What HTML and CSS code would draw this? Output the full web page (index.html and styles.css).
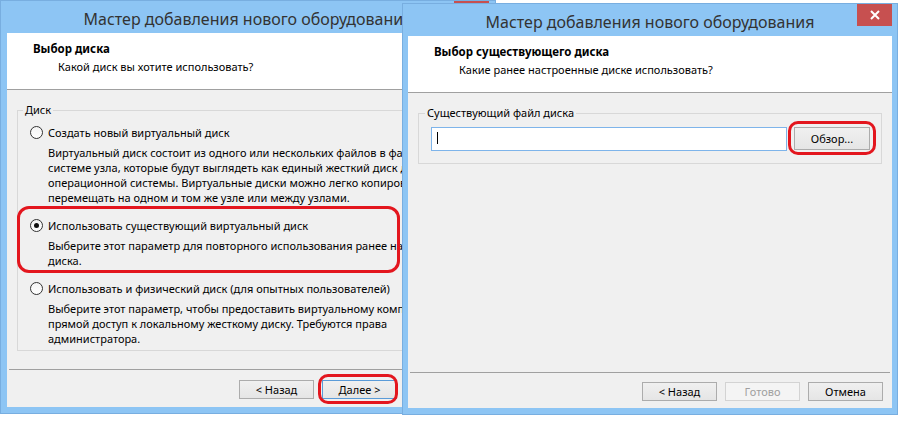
FILE: index.html
```html
<!DOCTYPE html>
<html lang="ru">
<head>
    <meta charset="UTF-8">
    <title>Мастер добавления нового оборудования</title>
    <link rel="stylesheet" href="styles.css">
</head>
<body>
<div class="desktop">
    <!-- окно на заднем плане -->
    <div class="window win-back">
        <div class="titlebar">
            <span class="title">Мастер добавления нового оборудования</span>
            <span class="close"><svg width="10" height="10" viewBox="0 0 10 10"><path d="M1 1L9 9M9 1L1 9" stroke="#fff" stroke-width="2"/></svg></span>
        </div>
        <div class="client">
            <div class="header">
                <div class="header-title">Выбор диска</div>
                <div class="header-sub">Какой диск вы хотите использовать?</div>
            </div>
            <div class="content">
                <fieldset class="group group-disk">
                    <legend>Диск</legend>
                    <div class="option">
                        <div class="radio"><span class="dot"></span>Создать новый виртуальный диск</div>
                        <p class="desc">Виртуальный диск состоит из одного или нескольких файлов в файловой<br>системе узла, которые будут выглядеть как единый жесткий диск для<br>операционной системы. Виртуальные диски можно легко копировать или<br>перемещать на одном и том же узле или между узлами.</p>
                    </div>
                    <div class="option marked">
                        <div class="radio"><span class="dot on"></span>Использовать существующий виртуальный диск</div>
                        <p class="desc">Выберите этот параметр для повторного использования ранее настроенного<br>диска.</p>
                    </div>
                    <div class="option">
                        <div class="radio"><span class="dot"></span>Использовать и физический диск (для опытных пользователей)</div>
                        <p class="desc">Выберите этот параметр, чтобы предоставить виртуальному компьютеру<br>прямой доступ к локальному жесткому диску. Требуются права<br>администратора.</p>
                    </div>
                </fieldset>
            </div>
            <div class="footer footer-back">
                <button class="btn">&lt; Назад</button>
                <button class="btn default marked-next">Далее &gt;</button>
                <button class="btn">Отмена</button>
            </div>
        </div>
    </div>

    <!-- активное окно -->
    <div class="window win-front">
        <div class="titlebar">
            <span class="title">Мастер добавления нового оборудования</span>
            <span class="close"><svg width="10" height="10" viewBox="0 0 10 10"><path d="M1 1L9 9M9 1L1 9" stroke="#fff" stroke-width="2"/></svg></span>
        </div>
        <div class="client">
            <div class="header">
                <div class="header-title">Выбор существующего диска</div>
                <div class="header-sub">Какие ранее настроенные диске использовать?</div>
            </div>
            <div class="content">
                <fieldset class="group group-file">
                    <legend>Существующий файл диска</legend>
                    <div class="file-row">
                        <div class="input"><span class="caret"></span></div>
                        <button class="btn browse">Обзор...</button>
                    </div>
                </fieldset>
            </div>
            <div class="footer footer-front">
                <button class="btn">&lt; Назад</button>
                <button class="btn" disabled>Готово</button>
                <button class="btn">Отмена</button>
            </div>
        </div>
    </div>
</div>
</body>
</html>
```

FILE: styles.css
```css
body {
    margin: 0;
    font-family: "Noto Sans", "Open Sans", sans-serif;
    font-size: 11px;
    color: #000;
    background: #fff;
}
.desktop {
    position: relative;
    width: 900px;
    height: 421px;
    overflow: hidden;
}

/* окна */
.window {
    position: absolute;
    box-sizing: border-box;
    display: flex;
    flex-direction: column;
    background: #8dc5f4;
    border: 1px solid #78aee0;
}
.win-back {
    left: 0;
    top: 0;
    width: 496px;
    height: 414px;
    padding: 0 6px 6px;
}
.win-front {
    left: 402px;
    top: 3px;
    width: 496px;
    height: 412px;
    padding: 0 5px 6px;
}
.titlebar {
    position: relative;
    flex: none;
    height: 32px;
    display: flex;
    align-items: center;
    justify-content: center;
}
.title {
    font-size: 16px;
    color: #333;
    line-height: 1;
    padding-top: 3px;
    white-space: nowrap;
}
.close {
    position: absolute;
    right: 0;
    top: 0;
    width: 35px;
    height: 22px;
    background: #c75050;
    display: flex;
    align-items: center;
    justify-content: center;
}

.client {
    flex: 1;
    display: flex;
    flex-direction: column;
    background: #f0f0f0;
    overflow: hidden;
}
.header {
    flex: none;
    box-sizing: border-box;
    height: 57px;
    background: #fff;
    border-bottom: 1px solid #a0a0a0;
    padding: 8px 0 0 26px;
}
.header-title {
    font-size: 11.5px;
    font-weight: bold;
    line-height: 16px;
}
.header-sub {
    margin: 2px 0 0 25px;
    line-height: 16px;
}
.content {
    flex: 1;
    padding: 0 10px;
}

/* группы */
.group {
    margin: 12px 0 0;
    border: 1px solid #d8d8d8;
    min-width: 0;
}
.group legend {
    padding: 0 2px;
    line-height: 16px;
}
.group-disk {
    padding: 6px 11px 4px 12px;
}
.group-disk legend {
    margin-left: -7px;
}
.group-file {
    padding: 6px 11px 12px 12px;
}
.group-file legend {
    margin-left: -6px;
}

.option {
    position: relative;
}
.option + .option {
    margin-top: 12px;
}
.option.marked::after {
    content: "";
    position: absolute;
    left: -13px;
    top: -11px;
    width: 383px;
    height: 67px;
    box-sizing: border-box;
    border: 3px solid #e3161e;
    border-radius: 12px;
}
.radio {
    display: flex;
    align-items: center;
    height: 16px;
    white-space: nowrap;
}
.dot {
    position: relative;
    width: 11px;
    height: 11px;
    border: 1px solid #333;
    border-radius: 50%;
    background: linear-gradient(#f4f4f4, #fff);
    margin-right: 5px;
}
.dot.on::after {
    content: "";
    position: absolute;
    left: 3px;
    top: 3px;
    width: 5px;
    height: 5px;
    border-radius: 50%;
    background: #111;
}
.desc {
    margin: 5px 0 0 18px;
    line-height: 15px;
    white-space: nowrap;
}

/* поле файла */
.file-row {
    display: flex;
    align-items: flex-start;
    gap: 7px;
}
.input {
    flex: 1;
    box-sizing: border-box;
    height: 24px;
    border: 1px solid #7eb4ea;
    background: #fff;
}
.caret {
    display: block;
    width: 1px;
    height: 12px;
    margin: 4px 0 0 5px;
    background: #000;
}

/* кнопки */
.footer {
    flex: none;
    display: flex;
    justify-content: flex-end;
    gap: 8px;
    margin: 0 2px;
    border-top: 1px solid #a0a0a0;
    padding-right: 7px;
}
.footer-back {
    padding-top: 10px;
    padding-bottom: 8px;
}
.footer-front {
    padding-top: 9px;
    padding-bottom: 7px;
}
.btn {
    position: relative;
    box-sizing: border-box;
    width: 75px;
    height: 19px;
    padding: 0;
    font: inherit;
    line-height: 17px;
    color: #000;
    border: 1px solid #acacac;
    background: linear-gradient(#f0f0f0, #e5e5e5);
}
.btn.default {
    border-color: #5a9bd8;
}
.btn:disabled {
    color: #a0a0a0;
    border-color: #d3d3d3;
    background: #f4f4f4;
}
.btn.browse {
    width: 76px;
    height: 23px;
}
.btn.browse::after,
.btn.marked-next::after {
    content: "";
    position: absolute;
    border: 3px solid #e3161e;
    border-radius: 10px;
}
.btn.browse::after {
    inset: -7px -7px -6px -7px;
}
.btn.marked-next::after {
    inset: -7px -2px -6px -5px;
}
```
